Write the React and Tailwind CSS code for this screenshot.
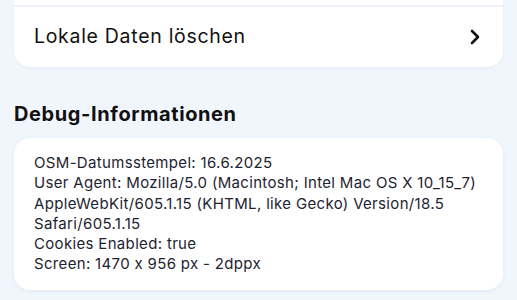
import { ChevronRight } from 'lucide-react'

const debugLines = [
  'OSM-Datumsstempel: 16.6.2025',
  'User Agent: Mozilla/5.0 (Macintosh; Intel Mac OS X 10_15_7) AppleWebKit/605.1.15 (KHTML, like Gecko) Version/18.5 Safari/605.1.15',
  'Cookies Enabled: true',
  'Screen: 1470 x 956 px - 2dppx',
]

export default function App() {
  return (
    <div
      className="min-h-screen bg-[#f1f6fd] px-[14px] pb-4 [font-feature-settings:'calt'_0]"
      style={{ fontFamily: 'Inter, "Noto Sans", sans-serif' }}
    >
      <div className="bg-white rounded-b-2xl shadow-[0_1px_3px_rgba(30,60,120,0.06)]">
        <div className="h-[5px]" />
        <div className="border-t-2 border-[#eef3fb]">
          <button className="w-full h-[60px] flex items-center justify-between pl-5 pr-[16px] text-left">
            <span className="text-[19.5px] text-[#111] tracking-[0.7px]">Lokale Daten löschen</span>
            <ChevronRight size={24} strokeWidth={2.6} className="text-[#111]" />
          </button>
        </div>
      </div>

      <h2 className="mt-[33px] text-[20px] font-bold text-[#111] leading-[28px] tracking-[0.6px]">
        Debug-Informationen
      </h2>

      <div className="mt-[10px] bg-white rounded-2xl px-5 pt-[15px] pb-[15px] shadow-[0_1px_4px_rgba(30,60,120,0.07)]">
        {debugLines.map((line) => (
          <p key={line} className="text-[15px] leading-[20.3px] text-[#1e2330] tracking-[0.33px]">
            {line}
          </p>
        ))}
      </div>
    </div>
  )
}
